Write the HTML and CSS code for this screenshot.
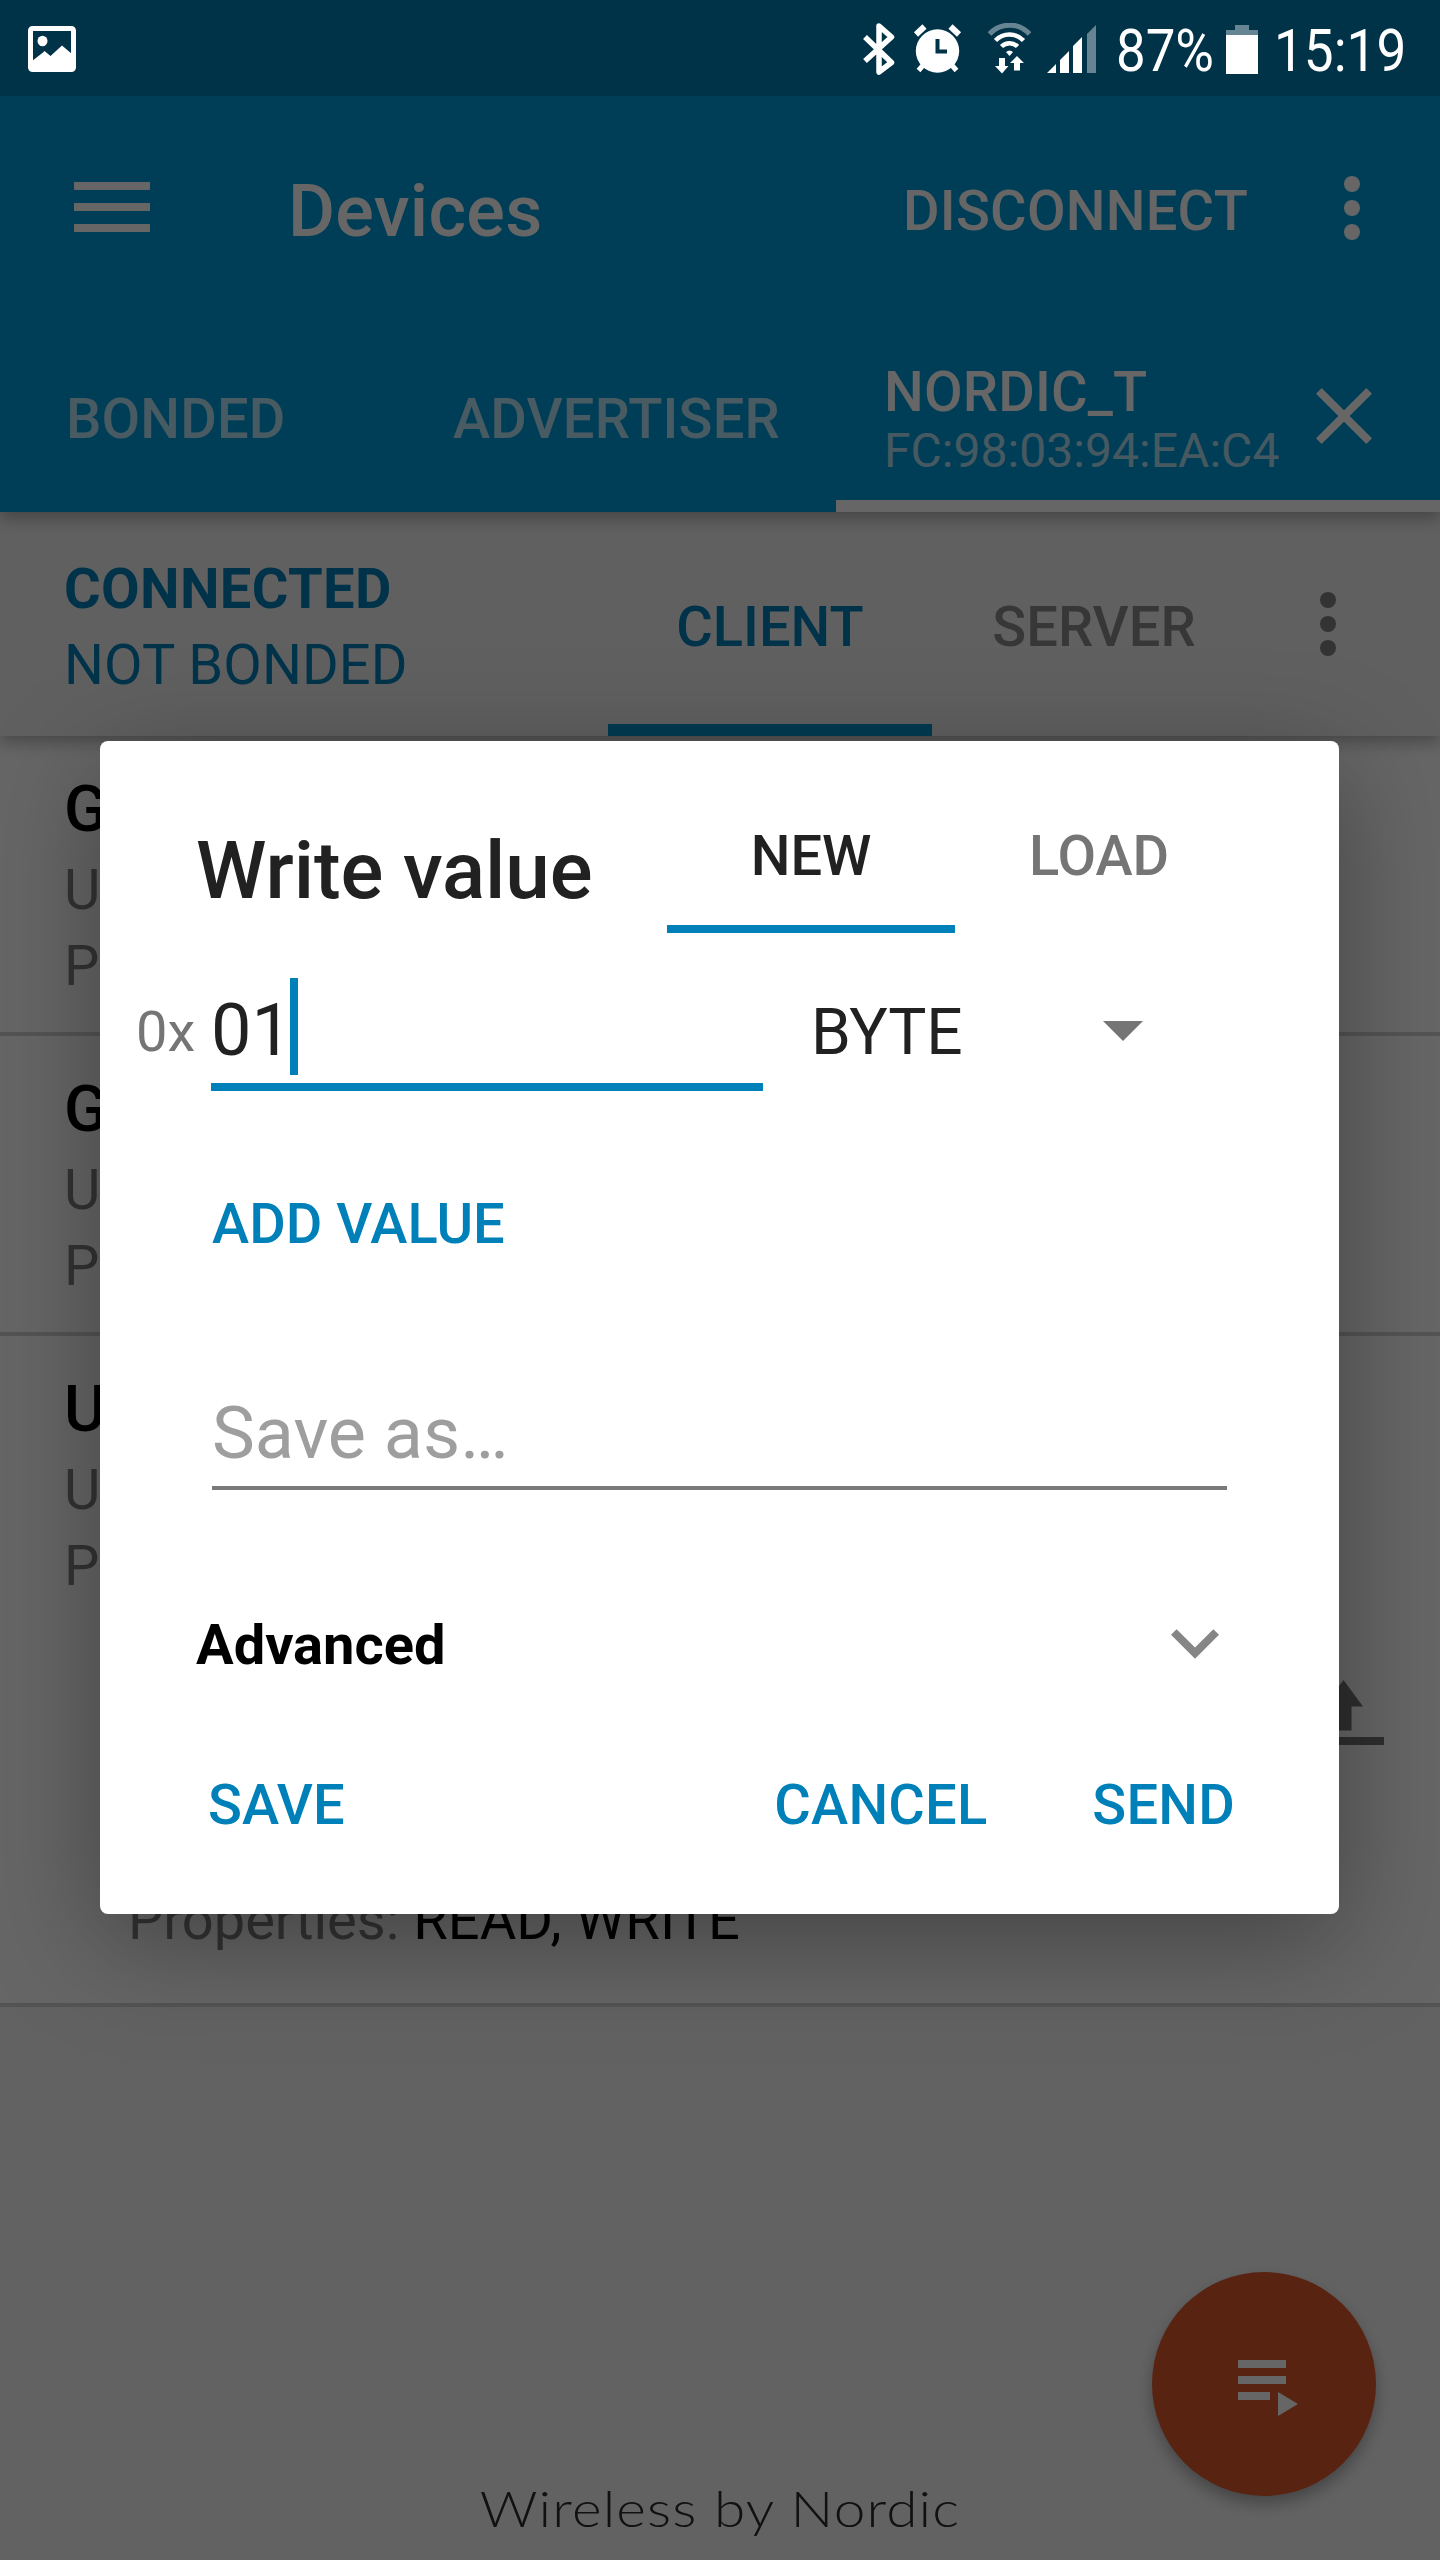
FILE: index.html
```html
<!DOCTYPE html>
<html lang="en">
<head>
<meta charset="utf-8">
<title>Devices</title>
<link rel="stylesheet" href="styles.css">
</head>
<body>
<div class="screen">
  <header class="status">
    <svg class="st-image" width="48" height="46" viewBox="0 0 48 46"><rect x="2.5" y="2.5" width="43" height="41" rx="2" fill="none" stroke="#fff" stroke-width="5"/><ellipse cx="14.5" cy="15" rx="5" ry="5.2" fill="#fff"/><path d="M4 35 15 26.500l1.500-1.500 6 5 11.500-10.500L44 28v16H4z" fill="#fff"/></svg>
    <svg class="st-icons" width="236" height="52" viewBox="862 23 236 52">
      <path d="M865 37 891.500 62.500 879 72V26l12.500 11L865 61" fill="none" stroke="#fff" stroke-width="5.500" stroke-linejoin="round"/>
      <circle cx="937.500" cy="51" r="21.700" fill="#fff"/>
      <path d="M916 34.500l8.500-8M959 34.500l-8.500-8" stroke="#fff" stroke-width="6" />
      <path d="M918.500 70.500l7-8M956.500 70.500l-7-8" stroke="#fff" stroke-width="5"/>
      <path d="M937.500 39v12.500H947" fill="none" stroke="#003248" stroke-width="4"/>
      <g fill="none" stroke="#fff" stroke-width="4.500">
        <path d="M989.500 34a27 27 0 0 1 40 0" opacity=".4" stroke-width="5"/>
        <path d="M995.500 40.500a19.500 19.500 0 0 1 28 0"/>
        <path d="M1001.500 46.500a11.500 11.500 0 0 1 16 0"/>
      </g>
      <path d="M1006 52q3.500-3 7 0l-3.500 4zM999 58h6v8h3.500l-6.500 7.500-7-7.500h4zM1017 56l7 7h-4v7.500h-6V63h-4z" fill="#fff"/>
      <path d="M1047 73l9-9v9zM1060 73V60l9-9v22zM1073 73V46l9-9v36z" fill="#fff"/>
      <path d="M1087 73V34l9-9v48z" fill="#fff" opacity=".4"/>
    </svg>
    <span class="st-pct">87%</span>
    <svg class="st-batt" width="32" height="49" viewBox="0 0 32 49"><path d="M0 5h9V0h14v5h9v5H0z" fill="#fff" opacity=".4"/><path d="M0 10h32v39H0z" fill="#fff"/></svg>
    <span class="st-time">15:19</span>
  </header>

  <div class="appbar">
    <div class="toolbar">
      <svg class="menu" width="76" height="50" viewBox="0 0 76 50"><path d="M0 0h76v8H0zM0 21h76v8H0zM0 42h76v8H0z" fill="#fff"/></svg>
      <h1 class="title">Devices</h1>
      <span class="disconnect">DISCONNECT</span>
      <svg width="16" height="64" viewBox="0 0 16 64"><g fill="#fff"><circle cx="8" cy="8" r="8"/><circle cx="8" cy="32" r="8"/><circle cx="8" cy="56" r="8"/></g></svg>
    </div>
    <nav class="tabs">
      <span class="tab bonded">BONDED</span>
      <span class="tab advertiser">ADVERTISER</span>
      <div class="device-tab">
        <div class="device-text">
          <div class="device-name">NORDIC_T</div>
          <div class="device-addr">FC:98:03:94:EA:C4</div>
        </div>
        <svg class="close" width="56" height="56" viewBox="5 5 14 14"><path d="M19 6.410 17.590 5 12 10.590 6.410 5 5 6.410 10.590 12 5 17.590 6.410 19 12 13.410 17.590 19 19 17.590 13.410 12z" fill="#fff"/></svg>
      </div>
    </nav>
  </div>

  <div class="subbar">
    <div class="state">
      <div class="connected">CONNECTED</div>
      <div>NOT BONDED</div>
    </div>
    <span class="subtab active">CLIENT</span>
    <span class="subtab">SERVER</span>
    <svg class="more" width="16" height="64" viewBox="0 0 16 64"><g fill="#808080"><circle cx="8" cy="8" r="8"/><circle cx="8" cy="32" r="8"/><circle cx="8" cy="56" r="8"/></g></svg>
  </div>

  <main class="services">
    <section class="service"><h2>G</h2><p>U</p><p>P</p></section>
    <section class="service"><h2>G</h2><p>U</p><p>P</p></section>
    <section class="service open">
      <h2>U</h2><p>U</p><p>P</p>
      <div class="characteristic">
        <svg class="upload" width="81" height="65" viewBox="0 0 81 65"><path d="M40.500 0 60 26.500H48.500V50.500h-16v-24H21zM0 57h81v8H0z" fill="#767676"/></svg>
        <p class="props">Properties: <b>READ, WRITE</b></p>
      </div>
    </section>
  </main>
  <footer class="footer">Wireless by Nordic</footer>
  <div class="fab"><svg width="60" height="56" viewBox="0 0 60 56"><path d="M0 0h48v8H0zM0 16h48v8H0zM0 32h32v8H0zM40 32l20 12-20 12z" fill="#fff"/></svg></div>

  <div class="scrim"></div>

  <div class="dialog">
    <div class="dialog-head">
      <h2 class="dialog-title">Write value</h2>
      <span class="mode active">NEW</span>
      <span class="mode">LOAD</span>
    </div>
    <div class="value-row">
      <span class="prefix">0x</span>
      <div class="field"><span class="digits">01</span><i class="cursor"></i></div>
      <span class="type">BYTE</span>
      <svg class="drop" width="40" height="20" viewBox="0 0 40 20"><path d="M0 0h40L20 20z" fill="#757575"/></svg>
    </div>
    <div class="add">ADD VALUE</div>
    <div class="save-as">Save as…</div>
    <div class="advanced"><span>Advanced</span><svg width="48" height="30" viewBox="6 8.590 12 7.410"><path d="M16.590 8.590 12 13.170 7.410 8.590 6 10l6 6 6-6z" fill="#868686"/></svg></div>
    <div class="actions"><span class="save">SAVE</span><span class="cancel">CANCEL</span><span>SEND</span></div>
  </div>
</div>
</body>
</html>
```
FILE: styles.css
```css
* { box-sizing: border-box; }
body { margin: 0; overflow: hidden; font-family: Roboto, "Liberation Sans", sans-serif; }
h1, h2, p { margin: 0; font-weight: 500; }
svg { display: block; flex: none; }
span { white-space: nowrap; }

.screen { position: relative; width: 1440px; height: 2560px; display: flex; flex-direction: column; background: #f6f6f6; font-size: 56px; overflow: hidden; }

/* Status bar stays above the scrim */
.status { position: relative; z-index: 5; flex: none; height: 96px; background: #003248; color: #fff; display: flex; align-items: flex-start; padding-left: 28px; font-size: 60px; line-height: 102px; }
.st-image { margin-top: 26px; }
.st-icons { margin: 23px 0 0 786px; }
.st-pct { width: 111px; margin-left: 18px; transform: scaleX(.88); transform-origin: left; }
.st-batt { margin: 25px 0 0 -1px; }
.st-time { margin-left: 16px; transform: scaleX(.885); transform-origin: left; }

/* App bar */
.appbar { position: relative; z-index: 2; flex: none; height: 416px; background: #009bd9; color: #fff; box-shadow: 0 6px 16px rgba(0, 0, 0, .3); }
.toolbar { height: 224px; display: flex; align-items: center; padding: 0 80px 0 74px; }
.menu { margin-bottom: 2px; }
.title { margin-left: 138px; padding-top: 7px; font-size: 72px; line-height: 84px; letter-spacing: .3px; }
.disconnect { margin-left: auto; margin-right: 96px; padding-top: 6px; font-weight: 500; line-height: 66px; letter-spacing: .25px; }
.tabs { display: flex; height: 192px; }
.tab { padding-left: 64px; font-weight: 500; line-height: 199px; letter-spacing: .2px; color: rgba(255, 255, 255, .7); }
.bonded { width: 389px; padding-left: 66px; }
.advertiser { width: 447px; }
.device-tab { display: flex; width: 604px; padding-left: 48px; border-bottom: 12px solid #fff; }
.device-text { padding-top: 39px; width: 432px; }
.device-name { font-weight: 500; line-height: 66px; letter-spacing: .2px; }
.device-addr { font-size: 48px; line-height: 52px; letter-spacing: .05px; color: rgba(255, 255, 255, .7); white-space: nowrap; }
.close { margin-top: 68px; }

/* Connection bar */
.subbar { position: relative; z-index: 1; flex: none; display: flex; height: 224px; background: #f0f0f0; color: #0080b9; box-shadow: 0 6px 16px rgba(0, 0, 0, .3); }
.state { width: 608px; padding: 39px 0 0 64px; line-height: 76px; letter-spacing: .1px; }
.connected { font-weight: 700; letter-spacing: .4px; }
.subtab { width: 324px; text-align: center; font-weight: 500; line-height: 230px; color: #8a8a8a; }
.subtab.active { color: #0080b9; box-shadow: inset 0 -12px #0093d0; }
.more { margin: 80px 0 0 64px; }

/* Services */
.service { height: 300px; padding: 31px 0 0 64px; background: #fff; border-bottom: 4px solid #d2d2d2; color: #000; }
.service h2 { font-size: 64px; line-height: 85px; }
.service p { font-weight: 400; line-height: 76px; color: #808080; }
.service.open { height: 671px; }
.characteristic { padding-left: 64px; }
.upload { margin: 76px 0 0 1175px; }
.service .props { margin-top: 137px; }
.props b { font-weight: 400; color: #000; letter-spacing: .1px; }
.footer { margin-top: auto; height: 86px; text-align: center; font: 300 50px/68px Lato, Inter, sans-serif; letter-spacing: 1px; color: #2c2c2c; transform: scaleX(1.135); }
.fab { position: absolute; left: 1152px; top: 2272px; width: 224px; height: 224px; border-radius: 50%; background: #db582b; display: flex; align-items: center; justify-content: center; padding: 8px 0 0 8px; box-shadow: 0 8px 16px rgba(0, 0, 0, .3); }

.scrim { position: absolute; inset: 0; z-index: 3; background: rgba(0, 0, 0, .6); }

/* Dialog */
.dialog { position: absolute; z-index: 6; left: 100px; top: 741px; width: 1239px; height: 1173px; border-radius: 8px; background: #fff; color: #212121; box-shadow: 0 28px 110px rgba(0, 0, 0, .34); }
.dialog-head { display: flex; height: 192px; padding-left: 96px; }
.dialog-title { width: 471px; padding-top: 83px; font-size: 80px; line-height: 94px; letter-spacing: -.1px; }
.mode { width: 288px; padding-top: 82px; text-align: center; font-weight: 500; line-height: 66px; color: #757575; }
.mode.active { color: #212121; border-bottom: 8px solid #0080b9; }
.value-row { display: flex; align-items: center; height: 120px; margin-top: 38px; }
.prefix { width: 75px; margin-left: 36px; padding-top: 1px; color: #757575; }
.field { display: flex; align-items: center; width: 552px; height: 120px; border-bottom: 8px solid #0080b9; font-size: 72px; line-height: 84px; }
.digits { padding-top: 7px; }
.cursor { width: 8px; height: 97px; margin: 0 0 1px -2px; background: #0080b9; }
.type { width: 287px; margin-left: 48px; padding-top: 2px; font-size: 64px; }
.drop { margin-left: 5px; }
.add { margin: 100px 0 0 112px; font-weight: 500; line-height: 66px; color: #0080b9; }
.save-as { width: 1015px; margin: 135px 0 0 112px; padding-bottom: 10px; border-bottom: 4px solid #7a7a7a; font-size: 72px; line-height: 84px; color: #9e9e9e; }
.advanced { display: flex; align-items: center; justify-content: space-between; margin-top: 122px; padding: 0 120px 0 96px; font-weight: 700; line-height: 66px; color: #000; }
.advanced svg { margin-bottom: 3px; }
.actions { display: flex; margin-top: 94px; padding: 0 104px 0 108px; font-weight: 500; line-height: 66px; letter-spacing: .2px; color: #0080b9; }
.save { letter-spacing: 0; }
.cancel { margin: 0 105px 0 auto; }
```
